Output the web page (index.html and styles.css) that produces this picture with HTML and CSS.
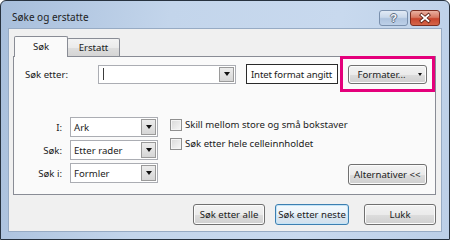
FILE: index.html
```html
<!DOCTYPE html>
<html lang="no">
<head>
<meta charset="utf-8">
<title>Søke og erstatte</title>
<link rel="stylesheet" href="styles.css">
</head>
<body>
<div class="window">
  <div class="titlebar">
    <span class="title">Søke og erstatte</span>
    <div class="caption-buttons">
      <span class="cap cap-help">?</span>
      <span class="cap cap-close">
        <svg width="28" height="14" viewBox="0 0 28 14">
          <path d="M10.5 4 L17.5 10 M17.5 4 L10.5 10" stroke="#5a2218" stroke-width="3.4" stroke-linecap="square"/>
          <path d="M10.5 4 L17.5 10 M17.5 4 L10.5 10" stroke="#ffffff" stroke-width="1.8" stroke-linecap="square"/>
        </svg>
      </span>
    </div>
  </div>
  <div class="client">
    <div class="tabs">
      <div class="tab tab-active">Søk</div>
      <div class="tab tab-inactive">Erstatt</div>
    </div>
    <div class="panel">
      <div class="find-row">
        <span class="find-label">Søk etter:</span>
        <div class="combo combo-find"><span class="caret"></span><span class="drop"><i class="tri"></i></span></div>
        <div class="format-box">Intet format angitt</div>
        <div class="highlight">
          <button class="btn btn-format"><span>Formater...</span><i class="tri-small"></i></button>
        </div>
      </div>
      <div class="options">
        <div class="scope-grid">
          <span class="lbl">I:</span>
          <div class="combo combo-sm"><span class="val">Ark</span><span class="drop"><i class="tri"></i></span></div>
          <span class="lbl">Søk:</span>
          <div class="combo combo-sm"><span class="val">Etter rader</span><span class="drop"><i class="tri"></i></span></div>
          <span class="lbl">Søk i:</span>
          <div class="combo combo-sm"><span class="val">Formler</span><span class="drop"><i class="tri"></i></span></div>
        </div>
        <div class="checks">
          <div class="check"><span class="box"></span><span>Skill mellom store og små bokstaver</span></div>
          <div class="check"><span class="box"></span><span>Søk etter hele celleinnholdet</span></div>
        </div>
        <button class="btn btn-alt">Alternativer &lt;&lt;</button>
      </div>
    </div>
    <div class="actions">
      <button class="btn btn-all">Søk etter alle</button>
      <button class="btn btn-default btn-next">Søk etter neste</button>
      <button class="btn btn-close">Lukk</button>
    </div>
  </div>
</div>
</body>
</html>
```

FILE: styles.css
```css
* { box-sizing: border-box; }

html, body {
  margin: 0;
  padding: 0;
}

body {
  width: 450px;
  height: 240px;
  overflow: hidden;
  background: #ffffff;
  font-family: "Noto Sans", "Liberation Sans", sans-serif;
  font-size: 9.6px;
  color: #1b1b1b;
}

.window {
  width: 450px;
  height: 240px;
  border: 1px solid #27323f;
  border-radius: 6px 6px 0 0;
  background: linear-gradient(100deg, #a7bedb 0%, #c3d5eb 35%, #c8d9ee 70%, #bccfe7 100%);
  padding: 0 7px 7px 7px;
  display: flex;
  flex-direction: column;
}

.titlebar {
  height: 27px;
  display: flex;
  align-items: flex-start;
  justify-content: space-between;
  padding-left: 4px;
}

.title {
  margin-top: 9px;
  font-size: 10px;
  color: #1e1e1e;
}

.caption-buttons {
  display: flex;
  gap: 2px;
  margin-top: 9px;
  margin-right: 2px;
}

.cap {
  height: 16px;
  border-radius: 3px;
  display: flex;
  align-items: center;
  justify-content: center;
}

.cap-help {
  width: 29px;
  border: 1px solid #7a90ad;
  background: linear-gradient(#e1eaf5 0%, #c9d8ea 45%, #aec3de 55%, #bdd0e8 100%);
  color: #f2f4f7;
  font-weight: bold;
  font-size: 11px;
  font-family: "Liberation Sans", sans-serif;
  text-shadow: 1px 0 0 #5f6f84, -1px 0 0 #5f6f84, 0 1px 0 #5f6f84, 0 -1px 0 #5f6f84;
}

.cap-close {
  width: 30px;
  border: 1px solid #7b2e22;
  background: linear-gradient(#eab0a1 0%, #d87a64 45%, #c8452d 55%, #d5664a 100%);
}

.client {
  flex: 1;
  border: 1px solid #97abc4;
  background: #f0f0f0;
  padding: 7px 5px 0 4px;
  display: flex;
  flex-direction: column;
}

.tabs {
  display: flex;
  align-items: flex-end;
  height: 21px;
  margin-left: 1px;
  margin-bottom: -1px;
  position: relative;
  z-index: 1;
}

.tab {
  border: 1px solid #898c95;
  border-bottom: none;
  display: flex;
  align-items: center;
  justify-content: center;
  border-radius: 2px 2px 0 0;
}

.tab-active {
  width: 54px;
  height: 21px;
  background: #fafafa;
  padding-bottom: 2px;
  position: relative;
  z-index: 2;
}

.tab-inactive {
  width: 53px;
  height: 18px;
  margin-left: -1px;
  margin-bottom: 1px;
  background: linear-gradient(#f3f3f3 0%, #ebebeb 50%, #dedede 51%, #d5d5d5 100%);
}

.panel {
  border: 1px solid #898c95;
  background: #fafafa;
  padding: 7px 8px 11px 11px;
}

.find-row {
  display: flex;
  align-items: center;
  height: 20px;
}

.find-label {
  width: 73px;
}

.combo {
  border: 1px solid #abadb3;
  background: #ffffff;
  display: flex;
  align-items: center;
  padding: 1px;
}

.combo-find {
  width: 138px;
  height: 19px;
}

.caret {
  width: 1px;
  height: 12px;
  background: #3c3c3c;
  margin-left: 3px;
}

.drop {
  margin-left: auto;
  width: 15px;
  height: 100%;
  border: 1px solid #9a9a9a;
  background: linear-gradient(#ececec, #d6d6d6);
  display: flex;
  align-items: center;
  justify-content: center;
}

.tri {
  width: 0;
  height: 0;
  border-left: 3.5px solid transparent;
  border-right: 3.5px solid transparent;
  border-top: 4px solid #111111;
}

.format-box {
  margin-left: 10px;
  width: 92px;
  height: 20px;
  border: 1px solid #2a2a2a;
  background: #ffffff;
  padding-left: 4px;
  display: flex;
  align-items: center;
  white-space: nowrap;
  letter-spacing: -0.15px;
}

.highlight {
  margin-left: 10px;
  position: relative;
  display: flex;
}

.highlight::after {
  content: "";
  position: absolute;
  left: -8px;
  top: -9px;
  right: -8px;
  bottom: -8px;
  border: 3px solid #e4007b;
  pointer-events: none;
}

.btn {
  font: inherit;
  color: #1b1b1b;
  padding: 0;
  margin: 0;
  border: 1px solid #707070;
  border-radius: 3px;
  background: linear-gradient(#f2f2f2 0%, #ebebeb 50%, #dddddd 51%, #cfcfcf 100%);
  box-shadow: inset 0 0 0 1px #fbfbfb;
  display: flex;
  align-items: center;
  justify-content: center;
  white-space: nowrap;
}

.btn-format {
  width: 79px;
  height: 19px;
  padding-left: 4px;
  gap: 12px;
}

.tri-small {
  width: 0;
  height: 0;
  border-left: 2.5px solid transparent;
  border-right: 2.5px solid transparent;
  border-top: 3px solid #111111;
}

.options {
  display: flex;
  margin-top: 33px;
}

.scope-grid {
  display: grid;
  grid-template-columns: 37px 88px;
  grid-auto-rows: 20px;
  column-gap: 8px;
  row-gap: 3px;
  align-items: center;
}

.lbl {
  text-align: right;
}

.combo-sm {
  height: 20px;
}

.val {
  margin-left: 2px;
  white-space: nowrap;
}

.checks {
  margin-left: 12px;
  display: flex;
  flex-direction: column;
  gap: 4px;
}

.check {
  height: 15px;
  display: flex;
  align-items: center;
  gap: 2px;
  white-space: nowrap;
}

.box {
  width: 12px;
  height: 12px;
  border: 1px solid #8f8f8f;
  background: linear-gradient(135deg, #d8d8d8, #f7f7f7);
  box-shadow: inset 0 0 0 1px #f4f4f4;
  margin-right: 1px;
}

.btn-alt {
  margin-left: auto;
  align-self: flex-end;
  width: 82px;
  height: 21px;
  margin-bottom: -2px;
}

.actions {
  display: flex;
  justify-content: flex-end;
  margin-top: 9px;
}

.btn-all {
  width: 72px;
  height: 21px;
}

.btn-next {
  width: 74px;
  height: 21px;
  margin-left: 10px;
}

.btn-close {
  width: 72px;
  height: 21px;
  margin-left: 15px;
}

.btn-default {
  border-color: #3c7fb1;
  background: linear-gradient(#f4f9fd 0%, #eaf3fa 50%, #dce8f2 51%, #d2e0ec 100%);
  box-shadow: inset 0 0 0 1px #c4e4f7;
}
```
